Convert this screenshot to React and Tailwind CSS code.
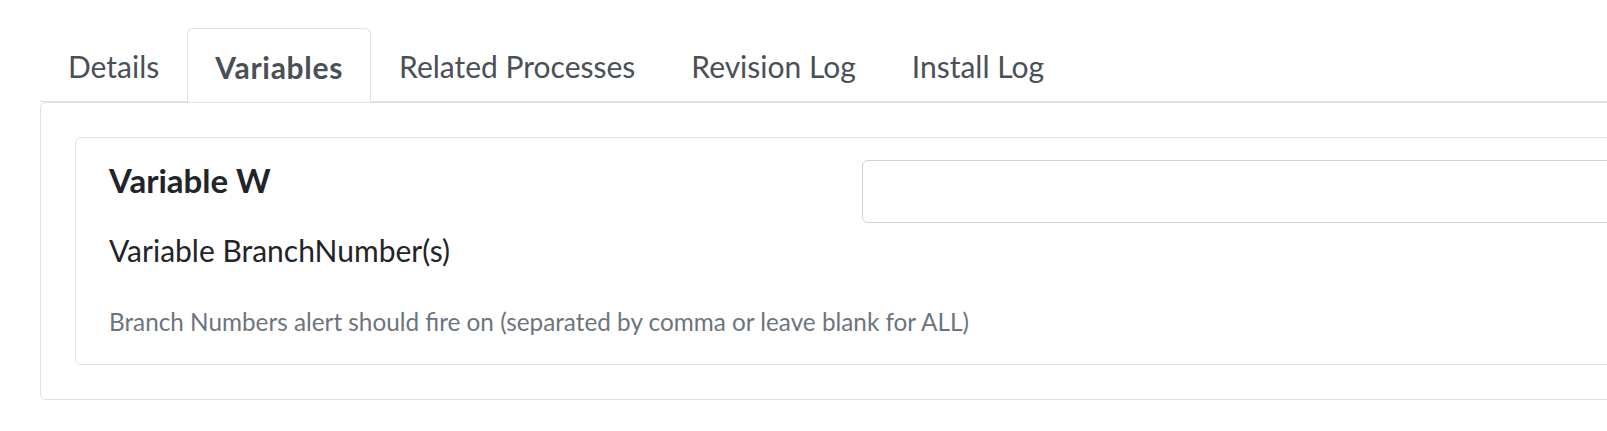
import React, { useState } from 'react';

const tabs = ['Details', 'Variables', 'Related Processes', 'Revision Log', 'Install Log'];

const App = () => {
  const [active, setActive] = useState('Variables');
  const [branches, setBranches] = useState('');

  return (
    <div className="w-full h-[431px] overflow-hidden bg-white" style={{ fontFamily: 'Lato, "Open Sans", sans-serif' }}>
      <div className="ml-[40px] pt-[28px] w-[1700px]">
        {/* tabs */}
        <ul className="flex border-b border-[#dee2e6]">
          {tabs.map(t => (
            <li key={t}>
              <button
                type="button"
                onClick={() => setActive(t)}
                className={
                  t === active
                    ? 'block px-[27px] pt-[15px] pb-[13px] leading-[44px] text-[30px] font-bold tracking-[0.7px] text-[#495057] bg-white border border-b-0 border-[#dee2e6] rounded-t-[6px] mb-[-1px] h-[74px]'
                    : 'block px-[27px] pt-[15px] pb-[13px] leading-[44px] text-[30px] text-[#495057] border border-b-0 border-transparent'
                }
              >
                {t}
              </button>
            </li>
          ))}
        </ul>

        {/* panel */}
        <div className="border border-[#dee2e6] rounded-[6px] p-[34px]">
          <div className="border border-[#dee2e6] rounded-[6px] pl-[33px] pt-[22px] pb-[26px]">
            <div className="flex">
              <div className="w-[753px] shrink-0">
                <h5 className="mt-[2px] text-[33px] leading-[36px] font-bold text-[#212529]">Variable W</h5>
                <label className="block mt-[32px] text-[30px] leading-[40px] text-[#212529]">Variable BranchNumber(s)</label>
              </div>
              <div className="flex-1">
                <input
                  type="text"
                  value={branches}
                  onChange={e => setBranches(e.target.value)}
                  className="block w-full h-[63px] border border-[#ced4da] rounded-[6px] px-4 text-[29px] text-[#495057] outline-none"
                />
              </div>
            </div>
            <p className="mt-[36px] text-[24.3px] leading-[32px] text-[#6c757d]">
              Branch Numbers alert should fire on (separated by comma or leave blank for ALL)
            </p>
          </div>
        </div>
      </div>
    </div>
  );
};

export default App;
